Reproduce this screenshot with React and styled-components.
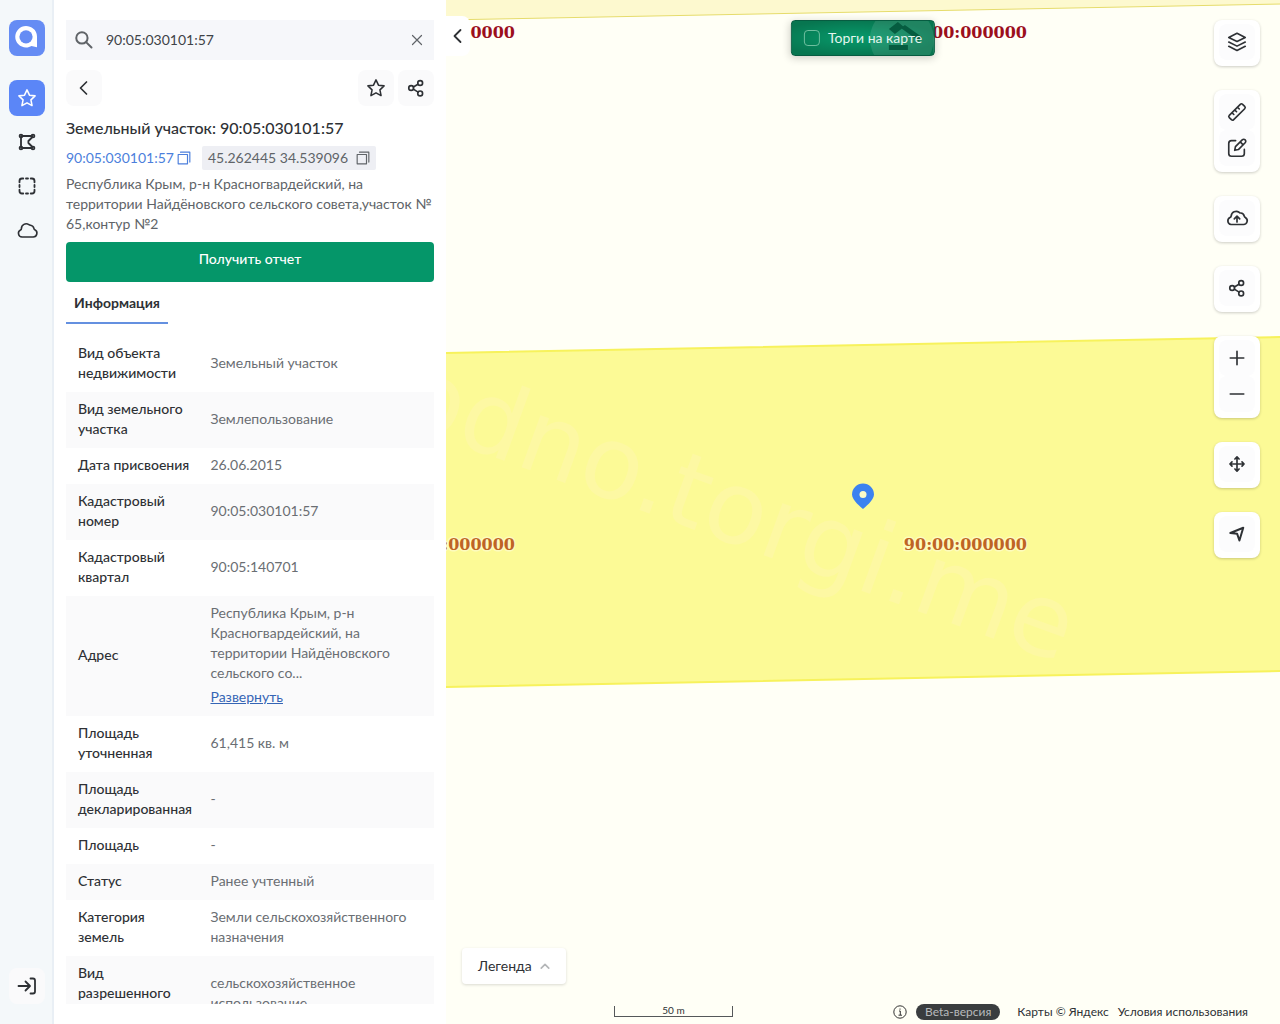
import { useState } from "react";
import styled, { createGlobalStyle } from "styled-components";

const rows = [
  { label: "Вид объекта недвижимости", value: "Земельный участок" },
  { label: "Вид земельного участка", value: "Землепользование" },
  { label: "Дата присвоения", value: "26.06.2015" },
  { label: "Кадастровый номер", value: "90:05:030101:57" },
  { label: "Кадастровый квартал", value: "90:05:140701" },
  {
    label: "Адрес",
    value:
      "Республика Крым, р-н Красногвардейский, на территории Найдёновского сельского со...",
    expandable: true,
  },
  { label: "Площадь уточненная", value: "61,415 кв. м" },
  { label: "Площадь декларированная", value: "-" },
  { label: "Площадь", value: "-" },
  { label: "Статус", value: "Ранее учтенный" },
  {
    label: "Категория земель",
    value: "Земли сельскохозяйственного назначения",
  },
  {
    label: "Вид разрешенного использования",
    value: "сельскохозяйственное использование",
  },
];

const icons = {
  star: (
    <path d="M12 3.2l2.7 5.7 6.1.8-4.5 4.3 1.2 6.3-5.5-3-5.5 3 1.2-6.3L3.2 9.7l6.1-.8z" />
  ),
  polygon: (
    <>
      <path d="M6 4.8h12M4.8 6v12M6 19.2h12M18.5 6l-4.8 4.8v2.4l4.8 4.8" />
      <circle cx="4.8" cy="4.8" r="1.7" />
      <circle cx="19.2" cy="4.8" r="1.7" />
      <circle cx="4.8" cy="19.2" r="1.7" />
      <circle cx="19.2" cy="19.2" r="1.7" />
    </>
  ),
  select: (
    <path d="M3 7.5V6a3 3 0 0 1 3-3h1.5M16.5 3H18a3 3 0 0 1 3 3v1.5M21 16.5V18a3 3 0 0 1-3 3h-1.5M7.5 21H6a3 3 0 0 1-3-3v-1.5M10.8 3h2.4M10.8 21h2.4M3 10.8v2.4M21 10.8v2.4" />
  ),
  cloud: (
    <path d="M7 19h11.2a3.8 3.8 0 0 0 1.6-7.2c-.6-.3-.8-.7-.9-1.4a4 4 0 0 0-3.4-3.1c-.7-.1-1.1-.3-1.6-.7a4.8 4.8 0 0 0-7.5 4.1c0 .7-.3 1-.9 1.3A3.7 3.7 0 0 0 7 19z" />
  ),
  login: (
    <path d="M3.5 12h11M10.5 7.5L15 12l-4.5 4.5M15.5 4.5H18a2 2 0 0 1 2 2v11a2 2 0 0 1-2 2h-2.5" />
  ),
  back: <path d="M14.5 6l-6 6 6 6" />,
  share: (
    <>
      <circle cx="6.2" cy="12" r="2.9" />
      <circle cx="17" cy="6" r="2.9" />
      <circle cx="17" cy="18.5" r="2.9" />
      <path d="M8.8 10.7l5.6-3.2M8.8 13.3l5.7 3.6" />
    </>
  ),
  search: (
    <>
      <circle cx="9.5" cy="9.5" r="6.8" />
      <path d="M14.8 14.8l6.2 6.2" />
    </>
  ),
  close: <path d="M6 6l12 12M18 6L6 18" />,
  copy: (
    <>
      <path d="M2 6h16v16H2z" />
      <path d="M6 2h16v17" />
    </>
  ),
  layers: (
    <>
      <path d="M12 2.5l9 4.5-9 4.5L3 7z" />
      <path d="M3 12l9 4.5 9-4.5M3 16.7l9 4.5 9-4.5" />
    </>
  ),
  ruler: (
    <path d="M3.6 15.6L15.6 3.6a1.8 1.8 0 0 1 2.5 0l2.3 2.3a1.8 1.8 0 0 1 0 2.5l-12 12a1.8 1.8 0 0 1-2.5 0l-2.3-2.3a1.8 1.8 0 0 1 0-2.5zM6.5 12.7l2 2M9.5 9.7l2 2M12.5 6.7l2 2" />
  ),
  edit: (
    <>
      <path d="M10.5 4H6a3 3 0 0 0-3 3v11a3 3 0 0 0 3 3h11a3 3 0 0 0 3-3v-4.5" />
      <path d="M9.5 14.5l.8-4 7.4-7.4a2.2 2.2 0 0 1 3.2 3.2l-7.4 7.4zM15.5 5.3l3.2 3.2" />
    </>
  ),
  upload: (
    <>
      <path d="M6 18.5h12.5a3.8 3.8 0 0 0 1.8-7.1c-.7-.3-.9-.8-1.1-1.5a4 4 0 0 0-3.4-2.9c-.7 0-1.2-.3-1.7-.7a5 5 0 0 0-7.9 3.6c-.1.9-.5 1.3-1.2 1.6A3.7 3.7 0 0 0 6 18.5z" />
      <path d="M12 16v-5.5M9.3 12.8l2.7-2.7 2.7 2.7" />
    </>
  ),
  plus: <path d="M12 3v18M3 12h18" />,
  minus: <path d="M3 12h18" />,
  move: (
    <path d="M12 3.5v17M3.5 12h17M9.5 6L12 3.5 14.5 6M9.5 18l2.5 2.5 2.5-2.5M6 9.5L3.5 12 6 14.5M18 9.5l2.5 2.5-2.5 2.5" />
  ),
  locate: <path d="M4 10.8L19.5 4.5l-4.6 15.3-2.7-8z" />,
  up: <path d="M3 17l9-9 9 9" />,
};

const Icon = ({ name, size = 24, stroke = 2 }) => (
  <svg
    width={size}
    height={size}
    viewBox="0 0 24 24"
    fill="none"
    stroke="currentColor"
    strokeWidth={stroke}
    strokeLinecap="round"
    strokeLinejoin="round"
    aria-hidden="true"
  >
    {icons[name]}
  </svg>
);

const Sidebar = () => (
  <SSidebar>
    <SLogo href="#" aria-label="Главная">
      <svg width="36" height="36" viewBox="0 0 36 36" fill="none">
        <path
          d="M17 6C22 6 28 9.5 28 16.5V27.2L22.5 26C21 26.9 19.2 27.5 17 27.5A10.75 10.75 0 0 1 17 6z"
          fill="#fff"
        />
        <circle cx="17" cy="16.8" r="6.6" fill="#658cf4" />
      </svg>
    </SLogo>
    <SNav>
      <SRailBtn $active aria-label="Избранное">
        <Icon name="star" size={22} stroke={1.7} />
      </SRailBtn>
      <SRailBtn aria-label="Полигон">
        <Icon name="polygon" size={20} stroke={2.2} />
      </SRailBtn>
      <SRailBtn aria-label="Выделение">
        <Icon name="select" size={20} stroke={2.2} />
      </SRailBtn>
      <SRailBtn aria-label="Облако">
        <Icon name="cloud" size={24} stroke={1.6} />
      </SRailBtn>
    </SNav>
    <SRailBtn $raised aria-label="Войти">
      <Icon name="login" size={24} stroke={1.8} />
    </SRailBtn>
  </SSidebar>
);

const ObjectPanel = () => {
  const [query, setQuery] = useState("90:05:030101:57");

  return (
    <SPanel>
      <SSearch>
        <Icon name="search" size={20} stroke={2.4} />
        <SSearchInput
          aria-label="Поиск"
          value={query}
          onChange={(e) => setQuery(e.target.value)}
        />
        <SPlainBtn aria-label="Очистить" onClick={() => setQuery("")}>
          <Icon name="close" size={18} stroke={1.6} />
        </SPlainBtn>
      </SSearch>
      <SActions>
        <SSquareBtn aria-label="Назад">
          <Icon name="back" size={24} stroke={1.7} />
        </SSquareBtn>
        <SActionGroup>
          <SSquareBtn aria-label="В избранное">
            <Icon name="star" size={22} stroke={1.7} />
          </SSquareBtn>
          <SSquareBtn aria-label="Поделиться">
            <Icon name="share" size={20} />
          </SSquareBtn>
        </SActionGroup>
      </SActions>
      <STitle>Земельный участок: 90:05:030101:57</STitle>
      <SChips>
        <SChip $link>
          90:05:030101:57
          <Icon name="copy" size={14} />
        </SChip>
        <SChip>
          45.262445 34.539096
          <Icon name="copy" size={14} />
        </SChip>
      </SChips>
      <SAddress>
        Республика Крым, р-н Красногвардейский, на территории Найдёновского
        сельского совета,участок № 65,контур №2
      </SAddress>
      <SReportBtn>Получить отчет</SReportBtn>
      <STabs role="tablist">
        <STab role="tab" aria-selected="true">
          Информация
        </STab>
      </STabs>
      <STableWrap>
        <STable>
          <tbody>
            {rows.map((row) => (
              <tr key={row.label}>
                <th scope="row">{row.label}</th>
                <td>
                  {row.value}
                  {row.expandable && <SMore href="#">Развернуть</SMore>}
                </td>
              </tr>
            ))}
          </tbody>
        </STable>
      </STableWrap>
    </SPanel>
  );
};

const MapCanvas = () => (
  <SCanvas viewBox="0 0 834 1024" preserveAspectRatio="xMidYMid slice">
    <rect width="834" height="1024" fill="#fffff6" />
    <path d="M-2 -2V20L836 4V-2z" fill="#fdf9cf" stroke="#e6dc6c" />
    <path
      d="M-4 353L838 337V671L-4 687z"
      fill="#fcfa96"
      stroke="#f7f25c"
      strokeWidth="2"
    />
    <SWatermark textAnchor="end" transform="translate(614 663) rotate(20)">
      odno.torgi.me
    </SWatermark>
    <SMapLabel x="69" y="38" textAnchor="end" fill="#9c0f1c">
      90:00:000000
    </SMapLabel>
    <SMapLabel x="581" y="38" textAnchor="end" fill="#9c0f1c">
      90:00:000000
    </SMapLabel>
    <SMapLabel x="69" y="550" textAnchor="end" fill="#bf6424">
      90:00:000000
    </SMapLabel>
    <SMapLabel x="581" y="550" textAnchor="end" fill="#bf6424">
      90:00:000000
    </SMapLabel>
    <path
      d="M417 509c-1.5-1.5-11-8.5-11-14.500a11 11 0 0 1 22 0c0 6-9.5 13-11 14.500z"
      fill="#3c82f0"
    />
    <circle cx="417" cy="494.5" r="3.5" fill="#fdfcc8" />
  </SCanvas>
);

const tools = [
  [["layers", "Слои", 22, 1.8]],
  [
    ["ruler", "Линейка", 22, 1.8],
    ["edit", "Рисование", 22, 1.8],
  ],
  [["upload", "Загрузить", 24, 1.7]],
  [["share", "Поделиться", 20, 2]],
  [
    ["plus", "Приблизить", 18, 2.2],
    ["minus", "Отдалить", 18, 2.2],
  ],
  [["move", "Перемещение", 20, 2]],
  [["locate", "Местоположение", 20, 2.4]],
];

const MapArea = () => {
  const [auctions, setAuctions] = useState(false);

  return (
    <SMap>
      <MapCanvas />
      <SCollapseBtn aria-label="Свернуть панель">
        <Icon name="back" size={24} stroke={1.8} />
      </SCollapseBtn>
      <SAuction>
        <svg width="64" height="36" viewBox="0 0 64 36" aria-hidden="true">
          <circle cx="32" cy="18" r="32" fill="#fff" opacity=".1" />
          <path
            d="M19 8l9-7 6 5-9 7zM31 7l4-3 17 12-3 4zM19 24h19v5H19z"
            fill="#065c40"
          />
        </svg>
        <SCheckbox
          type="checkbox"
          checked={auctions}
          onChange={(e) => setAuctions(e.target.checked)}
        />
        <span>Торги на карте</span>
      </SAuction>
      <STools>
        {tools.map((group) => (
          <SToolCard key={group[0][0]}>
            {group.map(([name, label, size, stroke]) => (
              <SSquareBtn key={name} $faint aria-label={label}>
                <Icon name={name} size={size} stroke={stroke} />
              </SSquareBtn>
            ))}
          </SToolCard>
        ))}
      </STools>
      <SLegendBtn>
        Легенда
        <Icon name="up" size={10} stroke={4} />
      </SLegendBtn>
      <SScale>50 m</SScale>
      <SCopyright>
        <svg width="14" height="14" viewBox="0 0 14 14" fill="none">
          <circle cx="7" cy="7" r="6.2" stroke="#333" />
          <path d="M6 6h1.3v4M5.5 10.2h3.5M7 3.5v1.2" stroke="#333" />
        </svg>
        <SBadge>Beta-версия</SBadge>
        <a href="#">Карты © Яндекс</a>
        <a href="#">Условия использования</a>
      </SCopyright>
    </SMap>
  );
};

const App = () => (
  <SPage>
    <GlobalStyle />
    <Sidebar />
    <ObjectPanel />
    <MapArea />
  </SPage>
);

const GlobalStyle = createGlobalStyle`
  * {
    box-sizing: border-box;
  }

  body {
    margin: 0;
    font-family: Lato, "Liberation Sans", sans-serif;
    font-size: 14px;
    line-height: 20px;
    color: #2e3135;
  }

  button,
  input {
    font: inherit;
    color: inherit;
    padding: 0;
    border: none;
    background: none;
  }

  button {
    cursor: pointer;
  }

  svg {
    display: block;
    flex-shrink: 0;
  }
`;

const SPage = styled.div`
  display: flex;
  height: 100vh;
  overflow: hidden;
`;

const SSidebar = styled.aside`
  width: 54px;
  flex-shrink: 0;
  padding: 20px 0;
  display: flex;
  flex-direction: column;
  align-items: center;
  gap: 24px;
  background: #f4f8fa;
  box-shadow: inset -2px 0 #e9eff5;
`;

const SLogo = styled.a`
  border-radius: 8px;
  background: #658cf4;
`;

const SNav = styled.nav`
  flex: 1;
  display: flex;
  flex-direction: column;
  gap: 8px;
`;

const SRailBtn = styled.button`
  width: 36px;
  height: 36px;
  display: flex;
  align-items: center;
  justify-content: center;
  border-radius: 8px;
  color: ${({ $active }) => ($active ? "#ffffff" : "#2e3135")};
  background: ${({ $active, $raised }) =>
    $active ? "#5b86f7" : $raised ? "#fafafb" : "transparent"};
`;

const SPanel = styled.main`
  width: 392px;
  flex-shrink: 0;
  padding: 20px 12px;
  display: flex;
  flex-direction: column;
  background: #ffffff;
`;

const SSearch = styled.div`
  height: 40px;
  flex-shrink: 0;
  padding: 0 8px;
  display: flex;
  align-items: center;
  gap: 12px;
  background: #f6f7fa;
  color: #606468;
`;

const SSearchInput = styled.input`
  flex: 1;
  min-width: 0;
  outline: none;
  color: #404347;
`;

const SPlainBtn = styled.button`
  display: flex;
`;

const SActions = styled.div`
  margin: 10px 0;
  display: flex;
  justify-content: space-between;
`;

const SActionGroup = styled.div`
  display: flex;
  gap: 4px;
`;

const SSquareBtn = styled.button`
  width: 36px;
  height: 36px;
  display: flex;
  align-items: center;
  justify-content: center;
  border-radius: 8px;
  background: ${({ $faint }) => ($faint ? "#fcfcfd" : "#fafafb")};
`;

const STitle = styled.h1`
  margin: 0 0 6px;
  font-size: 16px;
  line-height: 24px;
  font-weight: 500;
`;

const SChips = styled.div`
  display: flex;
  gap: 8px;
`;

const SChip = styled.button`
  height: 24px;
  padding: ${({ $link }) => ($link ? "0 3px 0 0" : "0 6px")};
  display: flex;
  align-items: center;
  gap: ${({ $link }) => ($link ? "3px" : "8px")};
  border-radius: 2px;
  color: ${({ $link }) => ($link ? "#4c7fdc" : "#606468")};
  background: ${({ $link }) => ($link ? "transparent" : "#eeeff4")};
`;

const SAddress = styled.p`
  margin: 4px 0 8px;
  color: #606468;
`;

const SReportBtn = styled.button`
  height: 40px;
  flex-shrink: 0;
  padding-bottom: 6px;
  border-radius: 4px;
  background: #059669;
  color: #ffffff;
  font-weight: 500;
`;

const STabs = styled.div`
  margin-bottom: 12px;
  display: flex;
`;

const STab = styled.button`
  height: 42px;
  padding: 2px 8px 0;
  border-bottom: 2px solid #6490e0;
  font-weight: 700;
`;

const STableWrap = styled.div`
  flex: 1;
  min-height: 0;
  overflow-y: auto;
  scrollbar-width: none;
`;

const STable = styled.table`
  width: 100%;
  table-layout: fixed;
  border-collapse: collapse;

  th,
  td {
    text-align: left;
    vertical-align: middle;
  }

  th {
    width: 36%;
    padding: 7px 6px 9px 12px;
    font-weight: 500;
  }

  td {
    padding: 7px 12px 9px;
    color: #6a6e73;
  }

  tr:nth-child(even) {
    background: #fafafb;
  }
`;

const SMore = styled.a`
  display: block;
  padding-top: 4px;
  color: #3565b5;
`;

const SMap = styled.section`
  flex: 1;
  min-width: 0;
  position: relative;
  background: #fffff6;
`;

const SCanvas = styled.svg`
  width: 100%;
  height: 100%;
`;

const SWatermark = styled.text`
  font-family: "DejaVu Sans", sans-serif;
  font-size: 101px;
  fill: #fdf8a3;
`;

const SMapLabel = styled.text`
  font-family: "DejaVu Serif", serif;
  font-size: 16px;
  font-weight: 700;
  stroke: #ffffff;
  stroke-opacity: 0.4;
  stroke-width: 3px;
  paint-order: stroke;
`;

const SCollapseBtn = styled.button`
  position: absolute;
  top: 16px;
  left: 0;
  width: 24px;
  height: 40px;
  display: flex;
  align-items: center;
  justify-content: center;
  border-radius: 0 8px 8px 0;
  background: #ffffff;
`;

const SAuction = styled.label`
  position: absolute;
  top: 20px;
  left: 50%;
  transform: translateX(-50%);
  height: 36px;
  padding: 0 12px;
  display: flex;
  align-items: center;
  gap: 8px;
  overflow: hidden;
  white-space: nowrap;
  border: 1px solid #075c41;
  border-radius: 4px;
  background: radial-gradient(ellipse at 45% 50%, #079a6b, #077650 75%);
  box-shadow: 0 2px 8px rgba(0, 0, 0, 0.2);
  color: #e4f5ee;

  > svg {
    position: absolute;
    top: 0;
    right: 0;
  }

  > span {
    position: relative;
  }
`;

const SCheckbox = styled.input`
  appearance: none;
  width: 16px;
  height: 16px;
  margin: 0;
  border: 1px solid #6fbf9f;
  border-radius: 4px;
`;

const STools = styled.div`
  position: absolute;
  top: 20px;
  right: 20px;
  display: flex;
  flex-direction: column;
  gap: 24px;
`;

const SToolCard = styled.div`
  padding: 4px 5px 6px;
  border-radius: 8px;
  background: #ffffff;
  box-shadow: 0 1px 3px rgba(0, 0, 0, 0.2);
`;

const SLegendBtn = styled.button`
  position: absolute;
  left: 16px;
  bottom: 40px;
  height: 36px;
  padding: 0 16px;
  display: flex;
  align-items: center;
  gap: 8px;
  border-radius: 4px;
  background: #ffffff;
  box-shadow: 0 1px 3px rgba(0, 0, 0, 0.15);

  svg {
    color: #b4b6b8;
  }
`;

const SScale = styled.div`
  position: absolute;
  left: 168px;
  bottom: 7px;
  width: 119px;
  height: 11px;
  border: 1px solid #55585a;
  border-top: none;
  font-size: 10px;
  line-height: 9px;
  text-align: center;
`;

const SCopyright = styled.footer`
  position: absolute;
  right: 32px;
  bottom: 4px;
  display: flex;
  align-items: center;
  gap: 9px;
  font-size: 12px;
  line-height: 16px;

  a {
    color: inherit;
    text-decoration: none;
  }
`;

const SBadge = styled.span`
  margin-right: 8px;
  padding: 0 9px;
  border-radius: 8px;
  background: #3a3d3f;
  color: #b8babc;
`;

export default App;
